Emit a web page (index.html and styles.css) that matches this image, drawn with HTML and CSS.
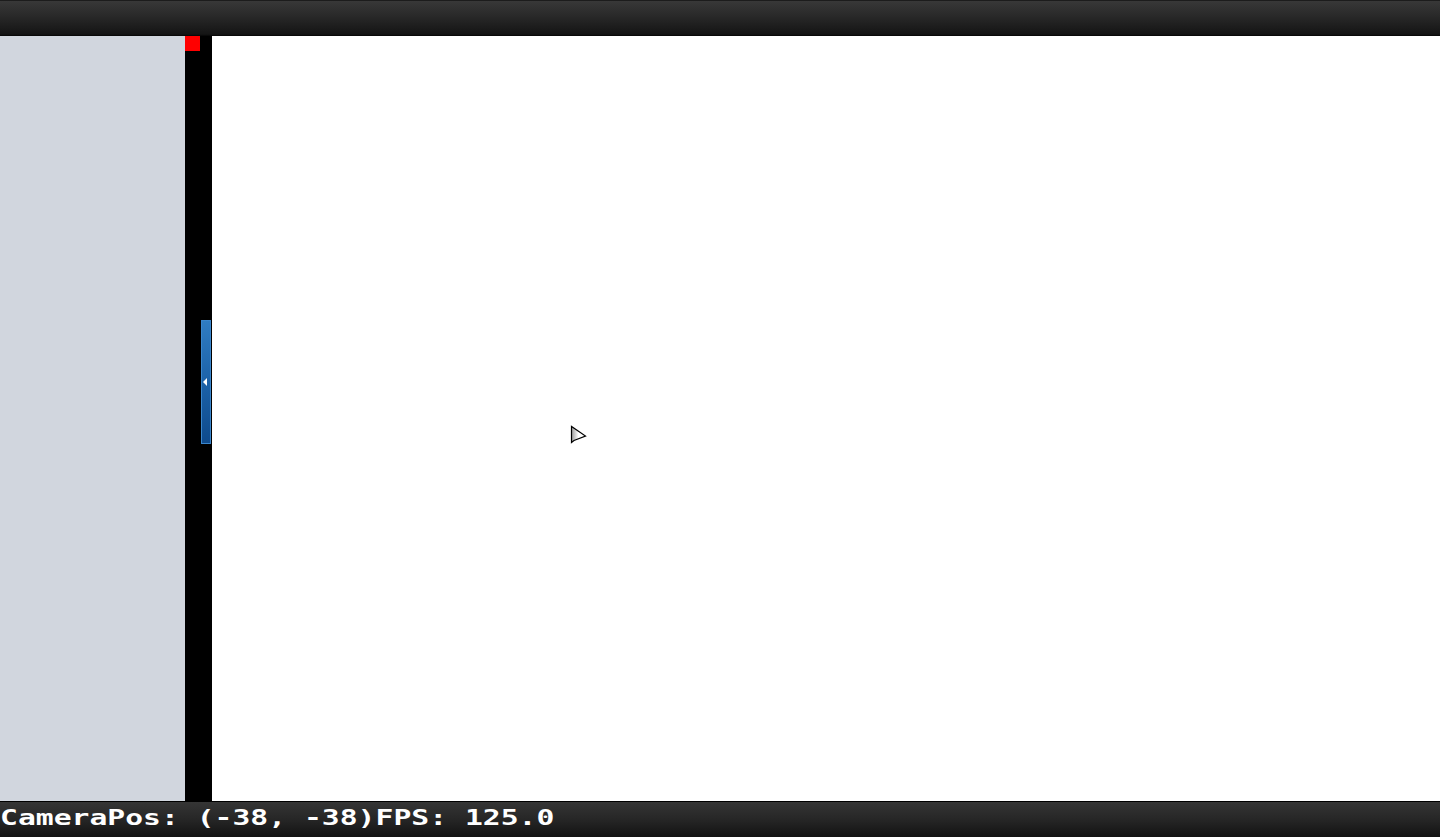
FILE: index.html
```html
<!DOCTYPE html>
<html>
<head>
<meta charset="utf-8">
<link rel="stylesheet" href="styles.css">
</head>
<body>
<div class="app">
  <div class="topbar"></div>
  <div class="main">
    <div class="sidebar"></div>
    <div class="divider">
      <div class="marker"></div>
      <div class="handle"><span class="arrow"></span></div>
    </div>
    <div class="canvas">
      <svg class="cursor" width="18" height="20" viewBox="0 0 18 20">
        <defs>
          <linearGradient id="cg" x1="0" y1="0" x2="1" y2="0">
            <stop offset="0" stop-color="#9a9a9a"/>
            <stop offset="0.5" stop-color="#ffffff"/>
            <stop offset="1" stop-color="#ffffff"/>
          </linearGradient>
        </defs>
        <path d="M1.5 1.5 L1.5 17.5 L4 15.5 L15.5 11 Z" fill="url(#cg)" stroke="#000" stroke-width="1.2" stroke-linejoin="miter"/>
      </svg>
    </div>
  </div>
  <div class="bottombar">
    <span class="status">CameraPos: (-38, -38)FPS: 125.0</span>
  </div>
</div>
</body>
</html>
```
FILE: styles.css
```css
html, body {
  margin: 0;
  padding: 0;
  width: 1440px;
  height: 837px;
  overflow: hidden;
  background: #fff;
}
.app {
  display: flex;
  flex-direction: column;
  width: 1440px;
  height: 837px;
}
.topbar {
  height: 35px;
  border-top: 1px solid #1c1c1c;
  border-bottom: 0;
  box-sizing: border-box;
  height: 36px;
  background: linear-gradient(to bottom, #383838 0%, #2a2a2a 40%, #141414 95%, #050505 100%);
  flex: none;
}
.main {
  flex: 1;
  display: flex;
  min-height: 0;
}
.sidebar {
  width: 185px;
  background: #d1d6de;
  flex: none;
}
.divider {
  width: 27px;
  background: #000;
  flex: none;
  display: flex;
  flex-direction: column;
}
.marker {
  width: 15px;
  height: 15px;
  background: #ff0000;
}
.handle {
  margin-top: 269px;
  margin-left: 16px;
  width: 10px;
  height: 124px;
  box-sizing: border-box;
  border: 1px solid #3a86cc;
  background: linear-gradient(to bottom, #2f7cc2 0%, #1c62a8 50%, #0e4a8c 100%);
  display: flex;
  align-items: center;
}
.arrow {
  width: 0;
  height: 0;
  margin-left: 1px;
  border-top: 4px solid transparent;
  border-bottom: 4px solid transparent;
  border-right: 4px solid #ffffff;
}
.canvas {
  flex: 1;
  background: #ffffff;
  position: relative;
}
.cursor {
  position: absolute;
  left: 358px;
  top: 389px;
}
.bottombar {
  height: 36px;
  flex: none;
  box-sizing: border-box;
  border-top: 1px solid #000;
  background: linear-gradient(to bottom, #353535 0%, #262626 50%, #121212 100%);
  overflow: hidden;
}
.status {
  display: inline-block;
  font-family: "DejaVu Sans Mono", "Liberation Mono", monospace;
  font-weight: bold;
  font-size: 22px;
  line-height: 22px;
  color: #ffffff;
  white-space: pre;
  margin-top: 5px;
  transform: scaleX(1.35);
  transform-origin: left center;
}
```
